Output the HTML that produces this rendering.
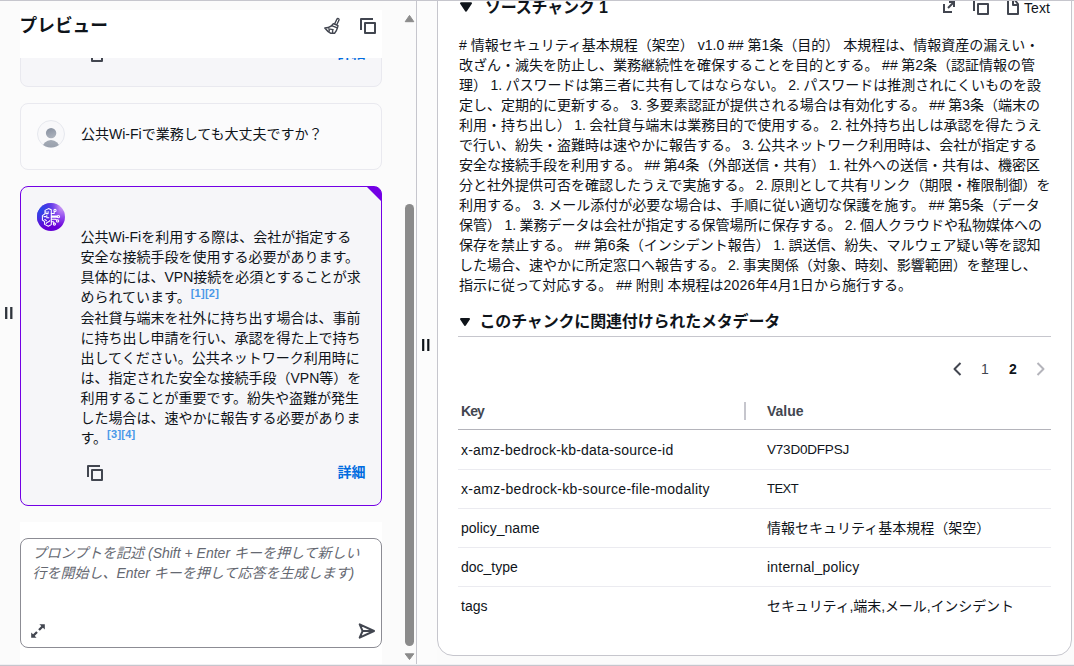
<!DOCTYPE html>
<html lang="ja">
<head>
<meta charset="utf-8">
<title>プレビュー</title>
<style>
*{box-sizing:border-box;margin:0;padding:0}
html,body{width:1074px;height:666px;overflow:hidden}
body{position:relative;background:#fbfbfb;color:#0f141a;font-family:"Liberation Sans","Noto Sans CJK JP",sans-serif;font-size:14px;line-height:20px}
.abs{position:absolute}
.nw{white-space:nowrap}
.b{font-weight:700}
svg{position:absolute;overflow:visible}
.ic{fill:none;stroke:#424650;stroke-width:2;stroke-linejoin:round}
.card{position:absolute;left:20px;width:362px;border:1px solid #e9e9ef;border-radius:8px;background:#f6f6f9}
.link{color:#006ce0;font-weight:700}
sup.c{color:#4a98e8;font-weight:700;font-size:11px;line-height:0;vertical-align:5px;letter-spacing:.25px}
.hl{position:absolute;height:1px;left:458px;width:593px;background:#ebebf0}
.k{position:absolute;left:461px;white-space:nowrap}
.v{position:absolute;left:767px;white-space:nowrap}
</style>
</head>
<body>

<!-- ===== LEFT PANEL ===== -->
<!-- first (partly hidden) card -->
<div class="card" style="top:20px;height:67px"></div>
<svg class="ic" style="left:87px;top:46px" width="16" height="16" viewBox="0 0 16 16"><path d="M15 5H5v10h10V5Z"/><path d="M13 1H1v11"/></svg>
<div class="abs nw link" style="left:337.500px;top:43px">詳細</div>

<!-- header -->
<div class="abs" style="left:20px;top:10px;width:362px;height:48px;background:#fff"></div>
<div class="abs nw b" style="left:19.500px;top:15px;font-size:17.700px;line-height:22px">プレビュー</div>
<svg id="broom" style="left:324px;top:18px" width="16" height="16" viewBox="0 0 16 16" fill="none" stroke="#424650" stroke-width="1.400" stroke-linejoin="round" stroke-linecap="round">
<path d="M13.900 1.700L11.700 6.200" stroke-width="3.700"/><path d="M13.900 1.700L11.700 6.400" stroke="#fff" stroke-width="1"/>
<path d="M9.300 5.700L14 7.700 13.400 9.900 7.500 7.700Z" fill="#fff"/>
<path d="M7.500 7.900C5.500 9.300 3 10 .8 10c1.700 2.300 4 4.200 6 5.300h3.800c1.400-1.700 2.400-3.700 2.800-5.500"/>
<path d="M4.500 10.900l4.600.7M5.200 11.100v2M8.600 11.600v3"/>
</svg>
<svg class="ic" style="left:360px;top:18px" width="16" height="16" viewBox="0 0 16 16"><path d="M15 5H5v10h10V5Z"/><path d="M13 1H1v11"/></svg>

<!-- user message -->
<div class="card" style="top:103px;height:67px;background:#fbfbfc"></div>
<svg style="left:37px;top:120px" width="28" height="28" viewBox="0 0 28 28">
<defs><linearGradient id="ug" x1="0.2" y1="0" x2="0.6" y2="1"><stop offset="0" stop-color="#8790a0"/><stop offset="1" stop-color="#adb3bd"/></linearGradient>
<linearGradient id="ub" x1="0" y1="0" x2="0" y2="1"><stop offset="0" stop-color="#a4abb6"/><stop offset="1" stop-color="#8b93a0"/></linearGradient>
<clipPath id="uc"><circle cx="14" cy="14" r="13.600"/></clipPath></defs>
<circle cx="14" cy="14" r="13.500" fill="#f8f8fa" stroke="#e6e8ee" stroke-width="1"/>
<g clip-path="url(#uc)"><circle cx="14.100" cy="13.100" r="5.200" fill="url(#ug)"/><ellipse cx="14" cy="28.500" rx="8.700" ry="8.600" fill="url(#ub)"/></g>
</svg>
<div class="abs nw" style="left:81px;top:124px">公共Wi-Fiで業務しても大丈夫ですか？</div>

<!-- AI answer -->
<div class="card" style="top:186px;height:320px;border-color:#7300e5;background:linear-gradient(to top right,rgba(115,0,229,0) 48.500%,#7300e5 51.500%) top right/16.500px 16.500px no-repeat border-box,#f6f6f9"></div>
<svg style="left:37px;top:202.700px" width="28" height="28" viewBox="0 0 28 28">
<defs>
<radialGradient id="g1" cx="0.92" cy="0.12" r="1"><stop offset="0" stop-color="#cfa2f6"/><stop offset=".4" stop-color="#9048ee"/><stop offset=".75" stop-color="#6a00d8"/><stop offset="1" stop-color="#6200d4"/></radialGradient>
<radialGradient id="g2" cx="0.08" cy="0.22" r=".72"><stop offset="0" stop-color="#2450ea"/><stop offset=".45" stop-color="#3a3fe6" stop-opacity=".8"/><stop offset="1" stop-color="#4a2fe0" stop-opacity="0"/></radialGradient>
</defs>
<circle cx="14" cy="14" r="14" fill="url(#g1)"/><circle cx="14" cy="14" r="14" fill="url(#g2)"/>
<g fill="none" stroke="#fff" stroke-width="1.050" stroke-linecap="round" stroke-linejoin="round">
<path d="M14.300 6.800L11.500 5.600 8 7.400V10.800L5.400 12.600V17L7.600 18.600V21.400L11.300 23.300 14.300 21.600Z"/>
<path d="M8.900 8.400V10.600H11.100V8.400M7 13.600H8.600M9.800 12.400V14.700H11.800M7.800 16.500L9.400 17.600M9.200 20.400C10 18.800 12.300 19.300 12.800 17.600"/>
<path d="M14.300 10.400H17.200V8.600M14.300 13.100H20.200M14.300 14.300H20.200M14.300 16.300H18.600L19.800 17.200M14.300 18.700H16.400L17 20"/>
<circle cx="18" cy="7.400" r="1.100"/><circle cx="21.400" cy="13.600" r="1.200"/><circle cx="20.600" cy="17.900" r="1.100"/><circle cx="17.400" cy="21" r="1.100"/>
</g>
</svg>
<div class="abs nw" style="left:80.500px;top:227px">公共Wi-Fiを利用する際は、会社が指定する<br>安全な接続手段を使用する必要があります。<br>具体的には、VPN接続を必須とすることが求<br>められています。<sup class="c">[1][2]</sup></div>
<div class="abs nw" style="left:80.500px;top:308px">会社貸与端末を社外に持ち出す場合は、事前<br>に持ち出し申請を行い、承認を得た上で持ち<br>出してください。公共ネットワーク利用時に<br>は、指定された安全な接続手段（VPN等）を<br>利用することが重要です。紛失や盗難が発生<br>した場合は、速やかに報告する必要がありま<br>す。<sup class="c">[3][4]</sup></div>
<svg class="ic" style="left:87px;top:465px" width="16" height="16" viewBox="0 0 16 16"><path d="M15 5H5v10h10V5Z"/><path d="M13 1H1v11"/></svg>
<div class="abs nw link" style="left:337.500px;top:462px">詳細</div>

<!-- prompt input -->
<div class="abs" style="left:20px;top:522px;width:362px;height:143px;background:#fff"></div>
<div class="abs" style="left:20px;top:538px;width:362px;height:110px;border:1px solid #8c8c94;border-radius:8px;background:#fff"></div>
<div class="abs nw" style="left:32.500px;top:543px;color:#656871;font-style:italic">プロンプトを記述 (Shift + Enter キーを押して新しい<br>行を開始し、Enter キーを押して応答を生成します)</div>
<svg style="left:31.300px;top:624px" width="14" height="14" viewBox="0 0 14 14" fill="#424650" stroke="#424650" stroke-width="2.300"><path d="M8.400 .2H13.800V5.600Z" stroke="none"/><path d="M.2 8.400V13.800H5.600Z" stroke="none"/><path d="M11.500 2.500L8 6M2.500 11.500L6 8"/></svg>
<svg class="ic" style="left:358px;top:623px" width="16" height="16" viewBox="0 0 16 16"><path d="M1.700 1.300L16 8 1.700 14.700 4.600 8ZM4.600 8H15"/></svg>

<!-- left resize handle -->
<svg style="left:0;top:307px" width="16" height="12" viewBox="0 0 16 12" stroke="#2f343c" stroke-width="2.300" fill="none"><path d="M6.200 0v12M11.300 0v12"/></svg>

<!-- scrollbar -->
<svg style="left:402px;top:0" width="14" height="666" viewBox="0 0 14 666" fill="#8b8b8b"><path d="M7.500 15.400L11.800 21.700H3.200Z" stroke="#8b8b8b" stroke-width="1" stroke-linejoin="round"/><rect x="3" y="204" width="9" height="442" rx="4.500"/><path d="M7.500 659.500L11.800 653.800H3.200Z" stroke="#8b8b8b" stroke-width="1" stroke-linejoin="round"/></svg>
<div class="abs" style="left:416px;top:0;width:1px;height:666px;background:#c6c6cd"></div>

<!-- splitter -->
<div class="abs" style="left:417px;top:0;width:20px;height:666px;background:#fcfcfc"></div>
<svg style="left:417px;top:339px" width="20" height="12" viewBox="0 0 20 12" stroke="#0f141a" stroke-width="2.200" fill="none"><path d="M6.200 0v12M11.300 0v12"/></svg>

<!-- ===== RIGHT PANEL ===== -->
<div class="abs" style="left:437px;top:-30px;width:635px;height:686px;background:#fff;border:1px solid #c6c6cd;border-radius:16px"></div>

<svg style="left:456px;top:-3px" width="20" height="20" viewBox="0 0 20 20" fill="#0f141a" stroke="#0f141a" stroke-width="2" stroke-linejoin="round"><path d="M5 6.250h10l-5 7.500-5-7.500Z"/></svg>
<div class="abs nw b" style="left:485px;top:-2px;font-size:16px;line-height:20px;letter-spacing:-.2px">ソースチャンク 1</div>
<svg class="ic" style="left:941px;top:-1px;stroke-linejoin:miter" width="16" height="16" viewBox="0 0 16 16"><path d="M3 5V13H11"/><path d="M7 9L13 3"/><path d="M8 3H13V8"/></svg>
<svg class="ic" style="left:973px;top:-1px" width="16" height="16" viewBox="0 0 16 16"><path d="M15 5H5v10h10V5Z"/><path d="M13 1H1v11"/></svg>
<svg class="ic" style="left:1005px;top:-1px" width="16" height="16" viewBox="0 0 16 16"><path d="M13 15H3V0h6l4 5v10Z"/><path d="M8 0v6h5"/></svg>
<div class="abs nw" style="left:1024px;top:-2px;letter-spacing:.1px">Text</div>

<div class="abs nw" style="left:459px;top:35px"># 情報セキュリティ基本規程（架空） v1.0 ## 第1条（目的） 本規程は、情報資産の漏えい・<br>
<span style="word-spacing:-0.35px">改ざん・滅失を防止し、業務継続性を確保することを目的とする。 ## 第2条（認証情報の管</span><br>
<span style="word-spacing:-0.5px">理） 1. パスワードは第三者に共有してはならない。 2. パスワードは推測されにくいものを設</span><br>
<span style="word-spacing:-0.4px">定し、定期的に更新する。 3. 多要素認証が提供される場合は有効化する。 ## 第3条（端末の</span><br>
<span style="word-spacing:-0.6px">利用・持ち出し） 1. 会社貸与端末は業務目的で使用する。 2. 社外持ち出しは承認を得たうえ</span><br>
<span style="word-spacing:-0.6px">で行い、紛失・盗難時は速やかに報告する。 3. 公共ネットワーク利用時は、会社が指定する</span><br>
<span style="word-spacing:-0.4px">安全な接続手段を利用する。 ## 第4条（外部送信・共有） 1. 社外への送信・共有は、機密区</span><br>
<span style="word-spacing:-0.6px">分と社外提供可否を確認したうえで実施する。 2. 原則として共有リンク（期限・権限制御）を</span><br>
<span style="word-spacing:-0.1px">利用する。 3. メール添付が必要な場合は、手順に従い適切な保護を施す。 ## 第5条（データ</span><br>
<span style="word-spacing:-0.5px">保管） 1. 業務データは会社が指定する保管場所に保存する。 2. 個人クラウドや私物媒体への</span><br>
<span style="word-spacing:-0.25px">保存を禁止する。 ## 第6条（インシデント報告） 1. 誤送信、紛失、マルウェア疑い等を認知</span><br>
<span style="word-spacing:-0.8px">した場合、速やかに所定窓口へ報告する。 2. 事実関係（対象、時刻、影響範囲）を整理し、</span><br>
指示に従って対応する。 ## 附則 本規程は<span style="letter-spacing:.2px">2026年4月1日</span>から施行する。</div>

<svg style="left:457px;top:314px" width="16" height="16" viewBox="0 0 16 16" fill="#0f141a" stroke="#0f141a" stroke-width="2" stroke-linejoin="round"><path d="M4 5h8l-4 6-4-6Z"/></svg>
<div class="abs nw b" style="left:479.500px;top:312px;font-size:16px;line-height:20px;letter-spacing:-.17px">このチャンクに関連付けられたメタデータ</div>
<div class="hl" style="top:336px;background:#c6c6cd"></div>

<!-- pagination -->
<svg class="ic" style="left:949px;top:361px" width="16" height="16" viewBox="0 0 16 16"><path d="M11.500 2 5.500 8l6 6"/></svg>
<div class="abs nw" style="left:981px;top:359px;color:#424650">1</div>
<div class="abs nw b" style="left:1009px;top:359px">2</div>
<svg class="ic" style="left:1033px;top:361px;stroke:#b4b4bb" width="16" height="16" viewBox="0 0 16 16"><path d="M4.500 2l6 6-6 6"/></svg>

<!-- table -->
<div class="k b" style="top:401px;color:#424650;letter-spacing:-.9px">Key</div>
<div class="abs" style="left:744px;top:402px;width:2px;height:18px;background:#c6c6cd"></div>
<div class="v b" style="top:401px;color:#424650">Value</div>
<div class="hl" style="top:429px;background:#b4b4bb"></div>

<div class="k" style="top:440px;letter-spacing:.2px">x-amz-bedrock-kb-data-source-id</div><div class="v" style="top:440px;font-size:13.500px;letter-spacing:-.2px">V73D0DFPSJ</div>
<div class="hl" style="top:469px"></div>
<div class="k" style="top:479px;letter-spacing:.29px">x-amz-bedrock-kb-source-file-modality</div><div class="v" style="top:479px;font-size:13px;letter-spacing:-.55px">TEXT</div>
<div class="hl" style="top:508px"></div>
<div class="k" style="top:518px">policy_name</div><div class="v" style="top:518px">情報セキュリティ基本規程（架空）</div>
<div class="hl" style="top:547px"></div>
<div class="k" style="top:557px">doc_type</div><div class="v" style="top:557px;letter-spacing:.2px">internal_policy</div>
<div class="hl" style="top:586px"></div>
<div class="k" style="top:596px">tags</div><div class="v" style="top:596px;letter-spacing:-.1px">セキュリティ,端末,メール,インシデント</div>

<!-- frame lines -->
<div class="abs" style="left:0;top:0;width:1074px;height:1px;background:#c6c6cd"></div>
<div class="abs" style="left:0;top:665px;width:1074px;height:1px;background:#c6c6cd"></div>
<div class="abs" style="left:0;top:664px;width:1074px;height:1px;background:#f0f0f3"></div>
</body>
</html>
